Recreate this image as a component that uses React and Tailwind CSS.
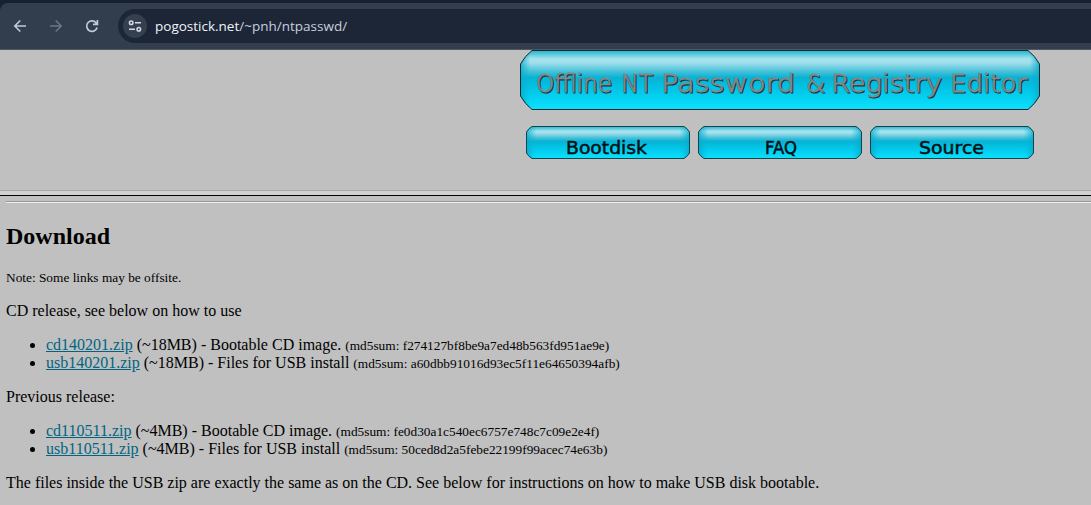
import React from "react";

function Plate({ id, w, h, cx, cy, children, stroke }) {
  const r = w - 0.5;
  const b = h - 0.5;
  const d = `M${cx} .5H${w - cx}Q${w - cx / 2.4} ${cy / 2.4} ${r} ${cy}V${h - cy}Q${w - cx / 2.4} ${h - cy / 2.4} ${w - cx} ${b}H${cx}Q${cx / 2.4} ${h - cy / 2.4} .5 ${h - cy}V${cy}Q${cx / 2.4} ${cy / 2.4} ${cx} .5Z`;
  return (
    <svg width={w} height={h} viewBox={`0 0 ${w} ${h}`} className="block shrink-0">
      <defs>
        <linearGradient id={id} x1="0" y1="0" x2="0" y2="1">
          <stop offset="0" stopColor="#25b4cf" />
          <stop offset=".07" stopColor="#5fcbdf" />
          <stop offset=".14" stopColor="#a5e2ed" />
          <stop offset=".2" stopColor="#a5e0ec" />
          <stop offset=".34" stopColor="#4fc4da" />
          <stop offset=".46" stopColor="#08b2d3" />
          <stop offset=".6" stopColor="#03c0e2" />
          <stop offset=".8" stopColor="#05d1f2" />
          <stop offset="1" stopColor="#0ee0fb" />
        </linearGradient>
        <linearGradient id={`${id}-edge`} x1="0" y1="0" x2="1" y2="0">
          <stop offset="0" stopColor="#06a9c9" stopOpacity=".8" />
          <stop offset={10 / w} stopColor="#06b9da" stopOpacity="0" />
          <stop offset={1 - 10 / w} stopColor="#06b9da" stopOpacity="0" />
          <stop offset="1" stopColor="#06a9c9" stopOpacity=".8" />
        </linearGradient>
      </defs>
      <path d={d} fill={`url(#${id})`} />
      <path d={d} fill={`url(#${id}-edge)`} stroke={stroke} strokeWidth="1" />
      {children}
    </svg>
  );
}

const TITLE = [
  ["Offline", 16, 76],
  ["NT", 101, 32],
  ["Password", 141, 134],
  ["&", 286, 19],
  ["Registry", 311, 111],
  ["Editor", 430, 77],
];

function TitleWords({ dx, dy, color, weight }) {
  return (
    <text fill={color} stroke={color} strokeWidth={weight} fontFamily="'DejaVu Sans', sans-serif" fontSize="25" fontWeight="200">
      {TITLE.map(([word, x, len]) => (
        <tspan key={word} x={x + dx} y={42 + dy} textLength={len} lengthAdjust="spacingAndGlyphs">{word}</tspan>
      ))}
    </text>
  );
}

function NavPlate({ label, x, len }) {
  return (
    <Plate id={`nav-${label}`} w={164} h={33} cx={6} cy={6} stroke="#12454f">
      <text x={x} y="27.5" textLength={len} lengthAdjust="spacingAndGlyphs" fontFamily="'DejaVu Sans', sans-serif" fontSize="17.5" fill="#001014" stroke="#001014" strokeWidth=".5">
        {label}
      </text>
    </Plate>
  );
}

function Release({ file, size, text, sum }) {
  return (
    <li className="h-[18px] whitespace-nowrap">
      <a href="#" className="text-[#006580] underline">{file}</a> ({size}) - {text}{" "}
      <span className="text-[13.333px]">(md5sum: {sum})</span>
    </li>
  );
}

export default function App() {
  return (
    <div className="h-[505px] w-full overflow-hidden bg-[#c0c0c0] font-['Liberation_Serif',serif] text-[16px] leading-[18px] text-black">
      <header className="h-[50px] bg-[#17212f] pt-[3px] font-['Open_Sans',sans-serif]">
        <div className="flex h-[47px] items-center rounded-tl-[8px] border-b border-[#505863] bg-[#323d4d]">
          <svg width="118" height="46" viewBox="0 0 118 46" fill="none" strokeWidth="1.6" className="shrink-0">
            <path d="M26 23H15M20.3 17.5L14.8 23l5.5 5.5" stroke="#c3cad8" />
            <path d="M50 23h11M55.7 17.5l5.5 5.5-5.5 5.5" stroke="#6d7683" />
            <path d="M96.4 20.2A5.3 5.3 0 1 0 97.1 24.5M97.4 17v4.3H93" stroke="#c3cad8" strokeWidth="1.7" />
          </svg>
          <div className="flex h-[34px] flex-1 items-center rounded-l-full bg-[#1d2636] pl-[5px]">
            <div className="flex size-6 items-center justify-center rounded-full bg-[#343f4f]">
              <svg width="14" height="14" viewBox="0 0 14 14" fill="none" stroke="#d5dbe6" strokeWidth="1.5">
                <circle cx="3.2" cy="3.7" r="1.8" />
                <path d="M7 3.7H13M1 10.2H7" />
                <circle cx="10.8" cy="10.2" r="1.8" />
              </svg>
            </div>
            <div className="ml-2 text-[13.5px] whitespace-nowrap text-[#c7cede]">
              <span className="text-[#f0f3fa]">pogostick.net</span>/~pnh/ntpasswd/
            </div>
          </div>
        </div>
      </header>
      <section className="flex h-[140px] flex-col items-start pl-[520px]">
        <Plate id="banner" w={520} h={60} cx={12} cy={14} stroke="#102a30">
          <TitleWords dx={1} dy={1} color="#173a40" weight="1.1" />
          <TitleWords dx={0} dy={0} color="#858789" weight=".8" />
        </Plate>
        <nav className="mt-4 ml-[6px] flex gap-2">
          <NavPlate label="Bootdisk" x={40} len={81} />
          <NavPlate label="FAQ" x={67} len={32} />
          <NavPlate label="Source" x={49} len={65} />
        </nav>
      </section>
      <div className="h-[6px] border-t border-b border-t-[#a9a9a9] border-b-black bg-[#d0d0d0]" />
      <main className="pt-[5px] pl-[6px]">
        <hr className="h-[2px] border-t border-b border-t-[#999] border-b-[#eee]" />
        <h2 className="mt-5 text-[24px] leading-[27px] font-bold">Download</h2>
        <p className="mt-[19px] text-[13.333px]">Note: Some links may be offsite.</p>
        <p className="mt-[15px]">CD release, see below on how to use</p>
        <ul className="mt-4 list-disc pl-10">
          <Release file="cd140201.zip" size="~18MB" text="Bootable CD image." sum="f274127bf8be9a7ed48b563fd951ae9e" />
          <Release file="usb140201.zip" size="~18MB" text="Files for USB install" sum="a60dbb91016d93ec5f11e64650394afb" />
        </ul>
        <p className="mt-4">Previous release:</p>
        <ul className="mt-4 list-disc pl-10">
          <Release file="cd110511.zip" size="~4MB" text="Bootable CD image." sum="fe0d30a1c540ec6757e748c7c09e2e4f" />
          <Release file="usb110511.zip" size="~4MB" text="Files for USB install" sum="50ced8d2a5febe22199f99acec74e63b" />
        </ul>
        <p className="mt-4 whitespace-nowrap">The files inside the USB zip are exactly the same as on the CD. See below for instructions on how to make USB disk bootable.</p>
      </main>
    </div>
  );
}
